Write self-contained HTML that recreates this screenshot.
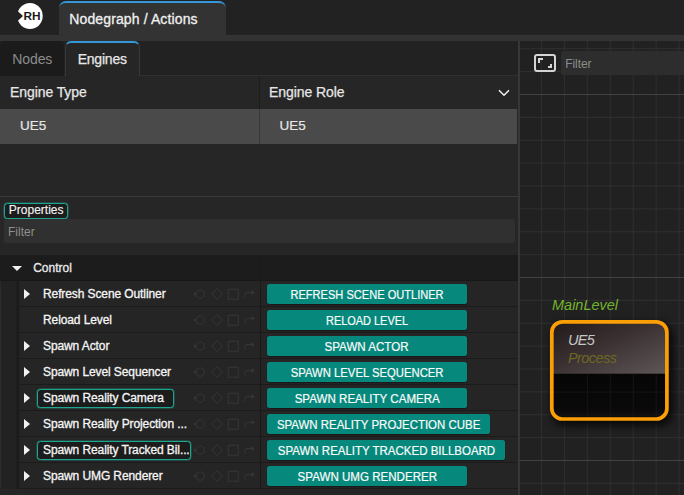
<!DOCTYPE html>
<html><head><meta charset="utf-8"><title>Nodegraph / Actions</title>
<style>
*{box-sizing:border-box;margin:0;padding:0}
html,body{width:684px;height:495px;overflow:hidden;background:#222;font-family:"Liberation Sans",sans-serif;color:#e4e4e4}
#app{position:relative;width:684px;height:495px;overflow:hidden;background:#222}
.abs{position:absolute}
#topbar{left:0;top:0;width:684px;height:35px;background:#222}
#maintab{left:59px;top:1px;width:167px;height:35px;background:#333;border-top:2px solid #3498d6;border-radius:7px 7px 0 0;font-size:14px;color:#f0f0f0;padding:7.5px 0 0 10.3px;white-space:nowrap;letter-spacing:0.12px;-webkit-text-stroke:0.3px #f0f0f0}
#bar{left:0;top:35px;width:684px;height:6px;background:#333}
#panel{left:0;top:41px;width:517.5px;height:454px;background:#262626}
#vbar{left:517.6px;top:41px;width:3px;height:454px;background:#373737}
#strip{left:0;top:41px;width:518px;height:35px;background:#222;border-bottom:1px solid #303030}
#tnodes{left:0px;top:41px;width:63.5px;height:35px;background:#1b1b1b;border-radius:5px 5px 0 0;color:#8c8c8c;font-size:14px;padding:10px 0 0 12.3px;letter-spacing:-0.1px}
#tengines{left:64.5px;top:41px;width:75.5px;height:35px;background:#262626;border:1px solid #393939;border-bottom:none;border-top:2px solid #3498d6;border-radius:6px 6px 0 0;color:#e8e8e8;font-size:14px;padding:8px 0 0 12.2px;letter-spacing:-0.22px;-webkit-text-stroke:0.25px #e8e8e8}
#hdr{left:0;top:76px;width:518px;height:33px;background:#262626;font-size:14px;color:#e6e6e6;letter-spacing:-0.08px}
#hdr span{position:absolute;top:8px;white-space:nowrap;-webkit-text-stroke:0.25px #e6e6e6}
#sel{left:0;top:109px;width:517.4px;height:34.5px;background:#4a4a4a;font-size:13.5px;color:#e6e6e6}
#sel span{position:absolute;top:9px;-webkit-text-stroke:0.2px #e6e6e6}
#coldiv{left:259px;top:76px;width:1px;height:67.5px;background:linear-gradient(180deg,#1c1c1c 0,#1c1c1c 33px,#383838 33px)}
#sep{left:0;top:196px;width:518px;height:1px;background:#3a3a3a}
#props{left:4.3px;top:202.7px;width:63.7px;height:16px;border:1px solid #1ea690;box-shadow:0 0 0 0.5px rgba(30,166,144,.55);border-radius:3.5px;font-size:12px;color:#f4f4f4;-webkit-text-stroke:0.12px #f4f4f4;padding:0 0 0 3.5px;line-height:13.5px;background:#1c1c1c;white-space:nowrap}
#filter{left:4px;top:219px;width:511px;height:23.6px;background:#303030;border-radius:2px;font-size:12px;color:#8e8e8e;padding:5.5px 0 0 4px}
#tree{left:0;top:255px;width:518px;height:234px;background:#222}
#gut{left:1px;top:281px;width:18px;height:208px;background:linear-gradient(90deg,#222 0,#222 14px,#191919 18px)}
#gut0{left:0;top:281px;width:1px;height:208px;background:#2c2c2c}
#ctrl{left:0;top:255px;width:518px;height:26px;background:#1c1c1c;border-bottom:1px solid #181818;font-size:12px;color:#eaeaea}
#ctrl .dtri{position:absolute;left:12px;top:11px;width:0;height:0;border-left:5px solid transparent;border-right:5px solid transparent;border-top:5.5px solid #f0f0f0}
#ctrl span.t{position:absolute;left:33.2px;top:6px;-webkit-text-stroke:0.3px #eaeaea}
.row{position:absolute;left:19px;width:499px;height:26px;background:#252525;border-bottom:1px solid #1b1b1b;font-size:12px;color:#f6f6f6}
.row .tri{position:absolute;left:5.3px;top:8px;width:0;height:0;border-top:5px solid transparent;border-bottom:5px solid transparent;border-left:6px solid #f2f2f2}
.row .lab{position:absolute;left:24px;top:6px;white-space:nowrap;line-height:14px;letter-spacing:-0.1px;-webkit-text-stroke:0.3px #f6f6f6}
.row .bx{position:absolute;left:17.6px;top:4px;height:18.5px;border:1px solid #1ea690;border-radius:3.5px;background:#1c1c1c;box-shadow:0 0 0 0.5px rgba(30,166,144,.55)}
.row .ics{position:absolute;left:171px;top:6px}
.row .btn{position:absolute;left:248px;top:3px;height:20px;background:#06897c;border-radius:2.5px;text-align:center;font-size:12px;color:#fafafa;line-height:22px;white-space:nowrap;-webkit-text-stroke:0.2px #fafafa;box-shadow:0 1px 1px rgba(0,0,0,.35)}
.row .btn span{display:inline-block}
#rowdiv{left:259.5px;top:255px;width:1.5px;height:234px;background:#1a1a1a}
#graph{left:520px;top:41px;width:164px;height:454px;background:#212121;overflow:hidden}
#graph svg.grid{position:absolute;left:0;top:0}
.mn{stroke:#303030;stroke-width:1}
.mj{stroke:#424242;stroke-width:1.2}
#gfilter{left:561px;top:51px;width:130px;height:24px;background:rgba(47,47,47,.85);border-radius:3px;font-size:12px;color:#8c8c8c;padding:5.5px 0 0 4.3px;letter-spacing:-0.1px}
#fsicon{left:533px;top:53px}
#mainlevel{left:552px;top:296.6px;font-size:14.5px;font-style:italic;color:#73b52c;white-space:nowrap}
#nodesh{left:551px;top:321px;width:117px;height:99px;border-radius:12px;box-shadow:3px 4px 8px 2px rgba(0,0,0,.75)}
#nodetxt{left:553.6px;top:323.6px;width:110px;height:60px}
#nodetxt .n1{position:absolute;left:14.3px;top:8.6px;font-size:14.5px;font-style:italic;color:#c6c6c6;letter-spacing:-0.6px}
#nodetxt .n2{position:absolute;left:14.3px;top:26.6px;font-size:14.5px;font-style:italic;color:#6e6724;letter-spacing:-0.55px}
</style></head><body>
<div id="app">
<div id="topbar" class="abs"></div>
<svg class="abs" style="left:16px;top:2px" width="28" height="28" viewBox="0 0 28 28"><ellipse cx="14" cy="14" rx="12.7" ry="13" fill="#fff"/><path d="M0 7.5 L7 14 L0 20.5 Z" fill="#222"/><text x="0" y="0" transform="translate(7.4 17.6) scale(1.16 1)" font-family="Liberation Sans, sans-serif" font-weight="bold" font-size="10.2" fill="#1a1a1a">RH</text></svg>
<div id="maintab" class="abs"><span id="mt">Nodegraph / Actions</span></div>
<div id="bar" class="abs"></div>
<div id="panel" class="abs"></div>
<div id="strip" class="abs"></div>
<div id="tnodes" class="abs"><span id="tn">Nodes</span></div>
<div id="tengines" class="abs"><span id="te">Engines</span></div>
<div id="hdr" class="abs"><span style="left:10px" id="h1">Engine Type</span><span style="left:269px" id="h2">Engine Role</span>
<svg style="position:absolute;left:497px;top:12px" width="14" height="10" viewBox="0 0 14 10"><path d="M2 2.2 L7 7.2 L12 2.2" fill="none" stroke="#eee" stroke-width="1.6"/></svg></div>
<div id="sel" class="abs"><span style="left:20px" id="s1">UE5</span><span style="left:279.5px" id="s2">UE5</span></div>
<div id="coldiv" class="abs"></div>
<div id="sep" class="abs"></div>
<div id="props" class="abs"><span id="pr">Properties</span></div>
<div id="filter" class="abs">Filter</div>
<div id="tree" class="abs"></div>
<div id="gut0" class="abs"></div>
<div id="ctrl" class="abs"><span class="dtri"></span><span class="t" id="ct">Control</span></div>
<div id="gut" class="abs"></div>
<div class="row" style="top:281px"><span class="tri"></span><span class="lab" id="l0">Refresh Scene Outliner</span><svg class="ics" width="70" height="14" viewBox="0 0 70 14"><g fill="none" stroke="#383535" stroke-width="1"><circle cx="10.2" cy="7.1" r="4.2"/><path d="M5.8 5.2 L2.9 7.1 L5.8 9 Z" fill="#383535" stroke="none"/><path d="M27 1.6 L32.4 7 L27 12.4 L21.6 7 Z"/><rect x="38.2" y="2.2" width="10" height="10"/><path d="M55 10.5 V7.5 Q55 5.5 57 5.5 H63.5"/><path d="M61.5 2.8 L64.8 5.5 L61.5 8.2 Z" fill="#383535" stroke="none"/></g></svg><span class="btn" style="width:200px"><span id="b0" style="transform:scaleX(0.9227)">REFRESH SCENE OUTLINER</span></span></div>
<div class="row" style="top:307px"><span class="lab" id="l1">Reload Level</span><svg class="ics" width="70" height="14" viewBox="0 0 70 14"><g fill="none" stroke="#383535" stroke-width="1"><circle cx="10.2" cy="7.1" r="4.2"/><path d="M5.8 5.2 L2.9 7.1 L5.8 9 Z" fill="#383535" stroke="none"/><path d="M27 1.6 L32.4 7 L27 12.4 L21.6 7 Z"/><rect x="38.2" y="2.2" width="10" height="10"/><path d="M55 10.5 V7.5 Q55 5.5 57 5.5 H63.5"/><path d="M61.5 2.8 L64.8 5.5 L61.5 8.2 Z" fill="#383535" stroke="none"/></g></svg><span class="btn" style="width:200px"><span id="b1" style="transform:scaleX(0.9117)">RELOAD LEVEL</span></span></div>
<div class="row" style="top:333px"><span class="tri"></span><span class="lab" id="l2">Spawn Actor</span><svg class="ics" width="70" height="14" viewBox="0 0 70 14"><g fill="none" stroke="#383535" stroke-width="1"><circle cx="10.2" cy="7.1" r="4.2"/><path d="M5.8 5.2 L2.9 7.1 L5.8 9 Z" fill="#383535" stroke="none"/><path d="M27 1.6 L32.4 7 L27 12.4 L21.6 7 Z"/><rect x="38.2" y="2.2" width="10" height="10"/><path d="M55 10.5 V7.5 Q55 5.5 57 5.5 H63.5"/><path d="M61.5 2.8 L64.8 5.5 L61.5 8.2 Z" fill="#383535" stroke="none"/></g></svg><span class="btn" style="width:200px"><span id="b2" style="transform:scaleX(0.9653)">SPAWN ACTOR</span></span></div>
<div class="row" style="top:359px"><span class="tri"></span><span class="lab" id="l3">Spawn Level Sequencer</span><svg class="ics" width="70" height="14" viewBox="0 0 70 14"><g fill="none" stroke="#383535" stroke-width="1"><circle cx="10.2" cy="7.1" r="4.2"/><path d="M5.8 5.2 L2.9 7.1 L5.8 9 Z" fill="#383535" stroke="none"/><path d="M27 1.6 L32.4 7 L27 12.4 L21.6 7 Z"/><rect x="38.2" y="2.2" width="10" height="10"/><path d="M55 10.5 V7.5 Q55 5.5 57 5.5 H63.5"/><path d="M61.5 2.8 L64.8 5.5 L61.5 8.2 Z" fill="#383535" stroke="none"/></g></svg><span class="btn" style="width:200px"><span id="b3" style="transform:scaleX(0.9417)">SPAWN LEVEL SEQUENCER</span></span></div>
<div class="row" style="top:385px"><span class="tri"></span><span class="bx" style="width:137.2px"></span><span class="lab" id="l4">Spawn Reality Camera</span><svg class="ics" width="70" height="14" viewBox="0 0 70 14"><g fill="none" stroke="#383535" stroke-width="1"><circle cx="10.2" cy="7.1" r="4.2"/><path d="M5.8 5.2 L2.9 7.1 L5.8 9 Z" fill="#383535" stroke="none"/><path d="M27 1.6 L32.4 7 L27 12.4 L21.6 7 Z"/><rect x="38.2" y="2.2" width="10" height="10"/><path d="M55 10.5 V7.5 Q55 5.5 57 5.5 H63.5"/><path d="M61.5 2.8 L64.8 5.5 L61.5 8.2 Z" fill="#383535" stroke="none"/></g></svg><span class="btn" style="width:200px"><span id="b4" style="transform:scaleX(0.9649)">SPAWN REALITY CAMERA</span></span></div>
<div class="row" style="top:411px"><span class="tri"></span><span class="lab" id="l5">Spawn Reality Projection ...</span><svg class="ics" width="70" height="14" viewBox="0 0 70 14"><g fill="none" stroke="#383535" stroke-width="1"><circle cx="10.2" cy="7.1" r="4.2"/><path d="M5.8 5.2 L2.9 7.1 L5.8 9 Z" fill="#383535" stroke="none"/><path d="M27 1.6 L32.4 7 L27 12.4 L21.6 7 Z"/><rect x="38.2" y="2.2" width="10" height="10"/><path d="M55 10.5 V7.5 Q55 5.5 57 5.5 H63.5"/><path d="M61.5 2.8 L64.8 5.5 L61.5 8.2 Z" fill="#383535" stroke="none"/></g></svg><span class="btn" style="width:223px"><span id="b5" style="transform:scaleX(0.9542)">SPAWN REALITY PROJECTION CUBE</span></span></div>
<div class="row" style="top:437px"><span class="tri"></span><span class="bx" style="width:154.6px"></span><span class="lab" id="l6">Spawn Reality Tracked Bil...</span><svg class="ics" width="70" height="14" viewBox="0 0 70 14"><g fill="none" stroke="#383535" stroke-width="1"><circle cx="10.2" cy="7.1" r="4.2"/><path d="M5.8 5.2 L2.9 7.1 L5.8 9 Z" fill="#383535" stroke="none"/><path d="M27 1.6 L32.4 7 L27 12.4 L21.6 7 Z"/><rect x="38.2" y="2.2" width="10" height="10"/><path d="M55 10.5 V7.5 Q55 5.5 57 5.5 H63.5"/><path d="M61.5 2.8 L64.8 5.5 L61.5 8.2 Z" fill="#383535" stroke="none"/></g></svg><span class="btn" style="width:238px"><span id="b6" style="transform:scaleX(0.9579)">SPAWN REALITY TRACKED BILLBOARD</span></span></div>
<div class="row" style="top:463px"><span class="tri"></span><span class="lab" id="l7">Spawn UMG Renderer</span><svg class="ics" width="70" height="14" viewBox="0 0 70 14"><g fill="none" stroke="#383535" stroke-width="1"><circle cx="10.2" cy="7.1" r="4.2"/><path d="M5.8 5.2 L2.9 7.1 L5.8 9 Z" fill="#383535" stroke="none"/><path d="M27 1.6 L32.4 7 L27 12.4 L21.6 7 Z"/><rect x="38.2" y="2.2" width="10" height="10"/><path d="M55 10.5 V7.5 Q55 5.5 57 5.5 H63.5"/><path d="M61.5 2.8 L64.8 5.5 L61.5 8.2 Z" fill="#383535" stroke="none"/></g></svg><span class="btn" style="width:200px"><span id="b7" style="transform:scaleX(0.9641)">SPAWN UMG RENDERER</span></span></div>
<div id="rowdiv" class="abs"></div>
<div id="vbar" class="abs"></div>
<div id="graph" class="abs"><svg class="grid" width="170" height="460" viewBox="0 0 170 460">
<line x1="21.40" y1="0" x2="21.40" y2="460" class="mn"/>
<line x1="44.35" y1="0" x2="44.35" y2="460" class="mn"/>
<line x1="67.30" y1="0" x2="67.30" y2="460" class="mn"/>
<line x1="90.25" y1="0" x2="90.25" y2="460" class="mn"/>
<line x1="113.20" y1="0" x2="113.20" y2="460" class="mn"/>
<line x1="136.15" y1="0" x2="136.15" y2="460" class="mn"/>
<line x1="159.10" y1="0" x2="159.10" y2="460" class="mn"/>
<line x1="0" y1="7.75" x2="170" y2="7.75" class="mn"/>
<line x1="0" y1="30.62" x2="170" y2="30.62" class="mn"/>
<line x1="0" y1="53.50" x2="170" y2="53.50" class="mj"/>
<line x1="0" y1="76.38" x2="170" y2="76.38" class="mn"/>
<line x1="0" y1="99.25" x2="170" y2="99.25" class="mn"/>
<line x1="0" y1="122.12" x2="170" y2="122.12" class="mn"/>
<line x1="0" y1="145.00" x2="170" y2="145.00" class="mn"/>
<line x1="0" y1="167.88" x2="170" y2="167.88" class="mn"/>
<line x1="0" y1="190.75" x2="170" y2="190.75" class="mn"/>
<line x1="0" y1="213.62" x2="170" y2="213.62" class="mn"/>
<line x1="0" y1="236.50" x2="170" y2="236.50" class="mj"/>
<line x1="0" y1="259.38" x2="170" y2="259.38" class="mn"/>
<line x1="0" y1="282.25" x2="170" y2="282.25" class="mn"/>
<line x1="0" y1="305.12" x2="170" y2="305.12" class="mn"/>
<line x1="0" y1="328.00" x2="170" y2="328.00" class="mn"/>
<line x1="0" y1="350.88" x2="170" y2="350.88" class="mn"/>
<line x1="0" y1="373.75" x2="170" y2="373.75" class="mn"/>
<line x1="0" y1="396.62" x2="170" y2="396.62" class="mn"/>
<line x1="0" y1="419.50" x2="170" y2="419.50" class="mj"/>
<line x1="0" y1="442.38" x2="170" y2="442.38" class="mn"/>
</svg></div>
<div id="gfilter" class="abs">Filter</div>
<svg id="fsicon" class="abs" width="24" height="20" viewBox="0 0 24 20"><rect x="2" y="2" width="20" height="16" rx="2" fill="none" stroke="#d4d4d4" stroke-width="2"/><path d="M6 10 V6 H10" fill="none" stroke="#d4d4d4" stroke-width="2"/><path d="M18 11 V14 H15" fill="none" stroke="#d4d4d4" stroke-width="2"/></svg>
<div id="mainlevel" class="abs">MainLevel</div>
<div id="nodesh" class="abs"></div>
<svg id="nodesvg" class="abs" style="left:546px;top:316px" width="130" height="112" viewBox="0 0 130 112">
<defs>
<linearGradient id="gt" x1="0" y1="0" x2="1" y2="1"><stop offset="0" stop-color="#21181a"/><stop offset="0.45" stop-color="#3a3031"/><stop offset="1" stop-color="#5f5858"/></linearGradient>
<linearGradient id="gb" x1="0" y1="0" x2="0" y2="1"><stop offset="0" stop-color="#070606"/><stop offset="0.7" stop-color="#0a0909"/><stop offset="1" stop-color="#130f0f"/></linearGradient>
<clipPath id="nc"><rect x="5.8" y="5.8" width="115.1" height="97.2" rx="10.6"/></clipPath>
</defs>
<g clip-path="url(#nc)"><rect x="4" y="4" width="120" height="53.8" fill="url(#gt)"/><rect x="4" y="57.8" width="120" height="48" fill="url(#gb)"/>
<path d="M41.35 57.8V106 M64.3 57.8V106 M87.25 57.8V106 M110.2 57.8V106 M4 76.1H124 M4 98.98H124" stroke="#171515" stroke-width="1" fill="none"/></g>
<rect x="5.8" y="5.8" width="115.1" height="97.2" rx="10.6" fill="none" stroke="#fc9e06" stroke-width="3.7"/>
</svg>
<div id="nodetxt" class="abs"><span class="n1">UE5</span><span class="n2">Process</span></div>
</div>
</body></html>
